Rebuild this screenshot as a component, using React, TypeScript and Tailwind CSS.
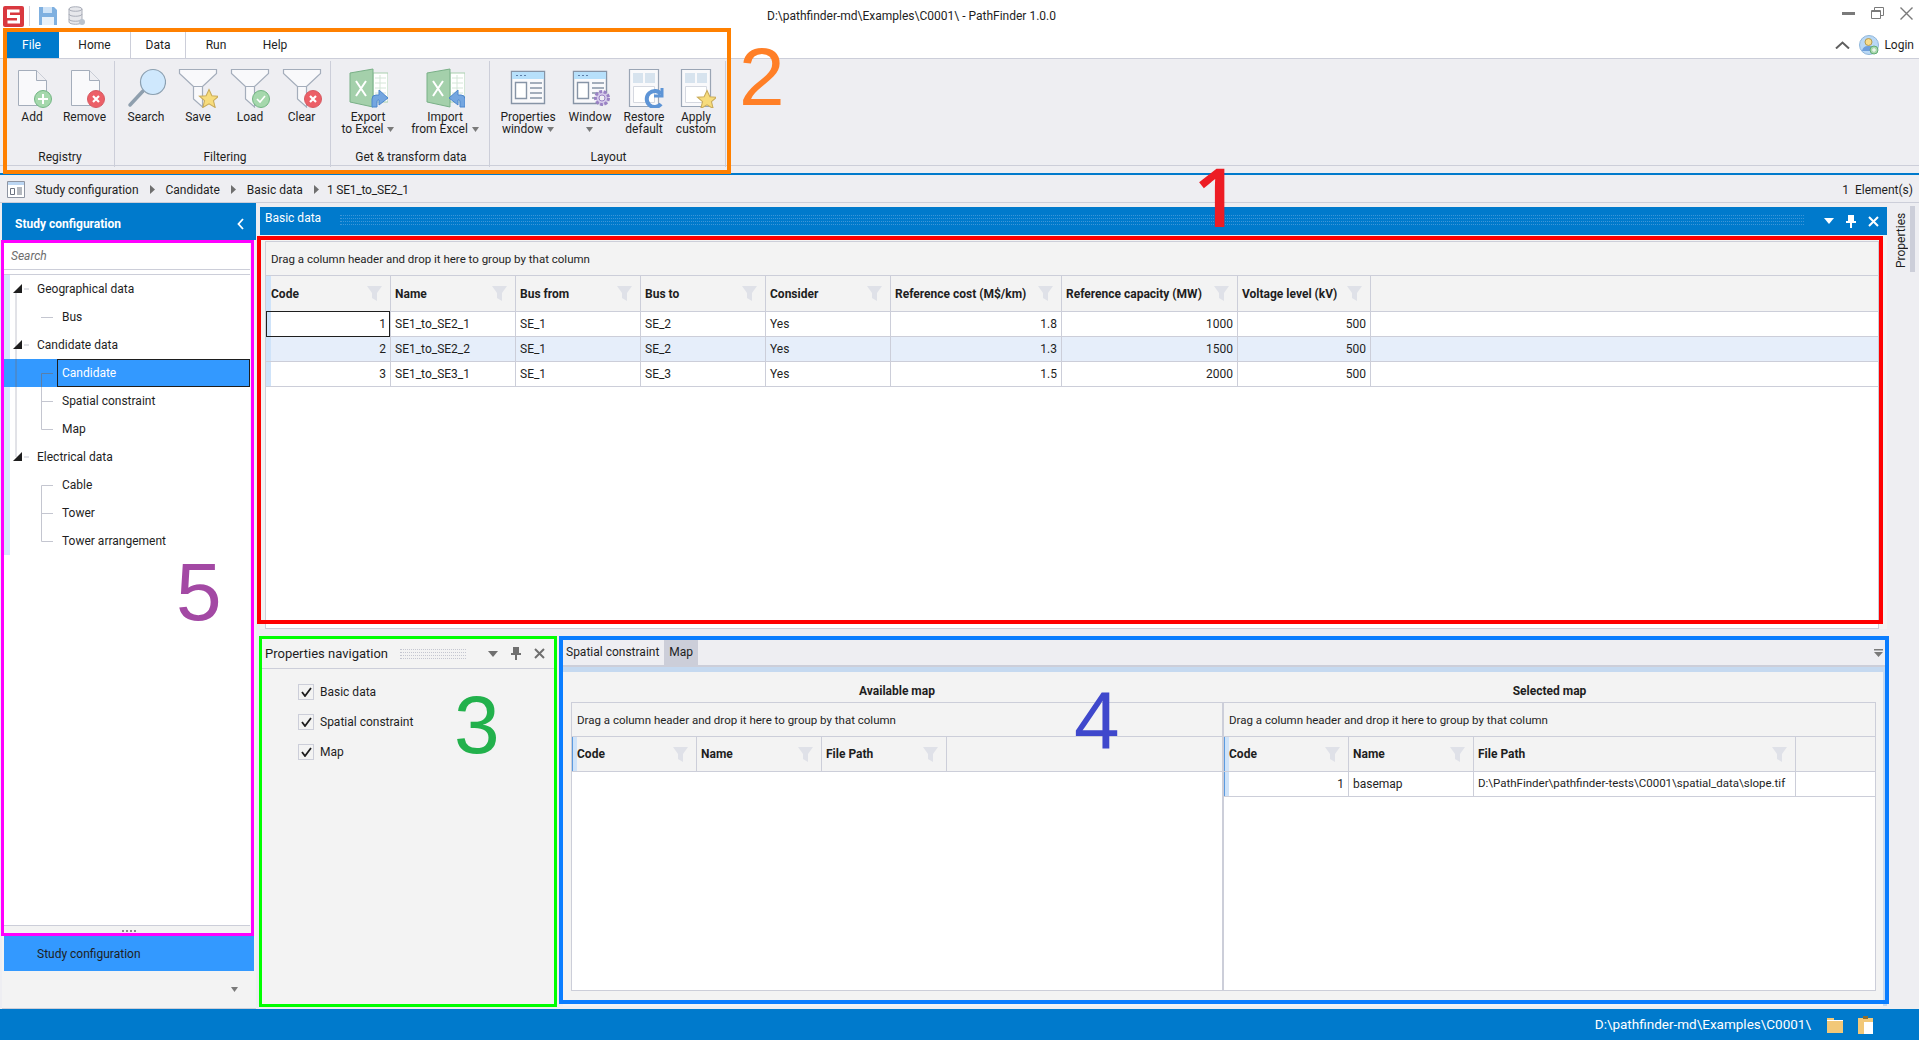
import React from 'react';

const line = 'border-[#ccced9]';

// ---- ribbon icons ----
function Badge({ kind, cx, cy, r = 8 }: { kind: 'add' | 'remove' | 'star' | 'check'; cx: number; cy: number; r?: number }) {
  if (kind === 'star') {
    const s = r / 8;
    return (
      <path
        transform={`translate(${cx} ${cy}) scale(${s})`}
        d="M0-9 2.700-3 9-2.600 4.200 1.600 5.800 8 0 4.600-5.800 8-4.200 1.600-9-2.600-2.700-3z"
        fill="#f7dc7c"
        stroke="#c9ab5a"
        strokeWidth="1"
      />
    );
  }
  const green = kind !== 'remove';
  return (
    <g>
      <circle cx={cx} cy={cy} r={r} fill={green ? '#a5d8ac' : '#ec5f67'} stroke={green ? '#72b583' : '#d65a62'} />
      {kind === 'add' && <path d={`M${cx - 5} ${cy}h10M${cx} ${cy - 5}v10`} stroke="#fff" strokeWidth="2" />}
      {kind === 'remove' && <path d={`M${cx - 3} ${cy - 3}l6 6M${cx + 3} ${cy - 3}l-6 6`} stroke="#fff" strokeWidth="2.200" />}
      {kind === 'check' && <path d={`M${cx - 4} ${cy}l3 3 5-6`} stroke="#fff" strokeWidth="1.600" fill="none" />}
    </g>
  );
}

function DocIcon({ kind }: { kind: 'add' | 'remove' }) {
  return (
    <svg width="40" height="40" viewBox="0 0 40 40">
      <path d="M6.500 2.500h18l10 10v25h-28z" fill="#f9f9fb" stroke="#a4adbb" />
      <path d="M24.500 2.500v10h10" fill="#eeeef2" stroke="#a4adbb" />
      <Badge kind={kind} cx={31} cy={31} r={8.500} />
    </svg>
  );
}

function SearchIcon() {
  return (
    <svg width="40" height="40" viewBox="0 0 40 40">
      <path d="M17 23 4 37" stroke="#8f9fae" strokeWidth="3.500" strokeLinecap="round" />
      <circle cx="27" cy="14" r="12.500" fill="#cfe8fd" stroke="#8b9fb0" strokeWidth="1.200" />
    </svg>
  );
}

function FunnelIcon({ kind }: { kind: 'star' | 'check' | 'remove' }) {
  return (
    <svg width="40" height="40" viewBox="0 0 40 40">
      <path d="M1.500 1.500h37v4L24.500 18.500V39L15.500 31V18.500L1.500 5.500z" fill="#f9f9fb" stroke="#a4adbb" strokeWidth="1.200" />
      <path d="M15.500 18.500h9" stroke="#a4adbb" />
      <Badge kind={kind} cx={31} cy={31} r={8.500} />
    </svg>
  );
}

function ExcelIcon({ dir }: { dir: 'out' | 'in' }) {
  return (
    <svg width="40" height="40" viewBox="0 0 40 40">
      <path d="M25 5h15v29H25z" fill="#fff" stroke="#a9cfae" />
      <path d="M27 10h11M27 15h11M27 20h11M27 25h11M32 7v22" stroke="#d5e6d8" />
      <path d="M2 5 25 1v38L2 34z" fill="#a4d0ab" stroke="#79b087" />
      <path d="m8 13 10 15M18 13 8 28" stroke="#fff" strokeWidth="2" />
      {dir === 'out' ? (
        <path d="M24 39v-8q0-4 4-4h3v-5l9 8-9 7v-5h-1q-1 0-1 2v5z" fill="#74a6e0" stroke="#4d86cc" />
      ) : (
        <path d="M40 39v-8q0-4-4-4h-3v-5l-9 8 9 7v-5h1q1 0 1 2v5z" fill="#74a6e0" stroke="#4d86cc" />
      )}
    </svg>
  );
}

function WindowIcon({ gear }: { gear?: boolean }) {
  return (
    <svg width="40" height="40" viewBox="0 0 40 40">
      <path d="M3.500 3.500h33v32h-33z" fill="#f9f9fb" stroke="#8794a6" strokeWidth="1.400" />
      <path d="M4 4h32v7H4z" fill="#b7e0fb" />
      <path d="M8 7.500h2M12 7.500h2M16 7.500h2" stroke="#5f7ea8" />
      <path d="M7.500 14.500h11v16h-11z" fill="#fff" stroke="#8794a6" strokeWidth="1.400" />
      <path d="M22 15h12M22 20h12M22 25h12M22 30h12" stroke="#8794a6" strokeWidth="1.400" />
      {gear && (
        <g>
          <circle cx="32" cy="30" r="6.500" fill="#d6cbeb" stroke="#9a82c4" strokeWidth="3" strokeDasharray="3 1.500" />
          <circle cx="32" cy="30" r="3" fill="#eeeef2" stroke="#9a82c4" />
        </g>
      )}
    </svg>
  );
}

function LayoutIcon({ kind }: { kind: 'restore' | 'star' }) {
  return (
    <svg width="40" height="40" viewBox="0 0 40 40">
      <path d="M5.500 1.500h29v37h-29z" fill="#f9f9fb" stroke="#9aa5b5" strokeWidth="1.200" />
      <path d="M9 5h10v10H9zM21 5h10v10H21z" fill="#d7e3ee" />
      <path d="M9.500 18.500h21v16h-21z" fill="#fff" stroke="#d5d8e0" />
      {kind === 'restore' ? (
        <g fill="none" stroke="#5d94d6" strokeWidth="4">
          <path d="M37 26a8 8 0 1 0 0 10" />
          <path d="M38 20v8h-8" strokeWidth="3" />
        </g>
      ) : (
        <Badge kind="star" cx={31} cy={32} r={8.500} />
      )}
    </svg>
  );
}

function Caret({ className = '' }: { className?: string }) {
  return (
    <svg width="7" height="5" viewBox="0 0 7 5" className={`inline-block ${className}`}>
      <path d="M0 0h7L3.500 5z" fill="#7a7a7a" />
    </svg>
  );
}

function RibbonButton({ icon, lines, w, caret }: { icon: React.ReactNode; lines: string[]; w: string; caret?: boolean }) {
  return (
    <div className={`flex flex-col items-center pt-[7px] ${w}`}>
      {icon}
      <div className="mt-[3px] text-center leading-[12px] whitespace-nowrap">
        {lines.map((l, i) => (
          <div key={i}>
            {l}
            {caret && lines.length > 1 && i === lines.length - 1 && <Caret className="ml-[4px]" />}
          </div>
        ))}
        {caret && lines.length === 1 && (
          <div>
            <Caret />
          </div>
        )}
      </div>
    </div>
  );
}

function RibbonGroup({ label, className, children }: { label: string; className: string; children: React.ReactNode }) {
  return (
    <div className={`flex flex-col h-full border-r ${line} my-[2px] ${className}`}>
      <div className="flex flex-1">{children}</div>
      <div className="h-[18px] pt-[1px] text-center leading-[14px]">{label}</div>
    </div>
  );
}

// ---- small shared bits ----
function FilterGlyph() {
  return (
    <svg width="15" height="15" viewBox="0 0 15 15" className="shrink-0">
      <path d="M0 0h15L10 7v8L5 12V7z" fill="#dfe1e8" />
    </svg>
  );
}

function PanelControls({ color, gap }: { color: string; gap: string }) {
  return (
    <div className={`flex items-center ${gap}`}>
      <svg width="10" height="6" viewBox="0 0 10 6">
        <path d="M0 0h10L5 6z" fill={color} />
      </svg>
      <svg width="10" height="13" viewBox="0 0 10 13">
        <path d="M2 0h6v6h2v2H6v5H4V8H0V6h2z" fill={color} />
      </svg>
      <svg width="11" height="11" viewBox="0 0 11 11">
        <path d="m1 1 9 9M10 1l-9 9" stroke={color} strokeWidth="2" />
      </svg>
    </div>
  );
}

function Dots({ className, color }: { className: string; color: string }) {
  return (
    <div className={`flex flex-col gap-[2px] ${className}`}>
      <div className={`border-t border-dotted ${color}`} />
      <div className={`border-t border-dotted ${color}`} />
      <div className={`border-t border-dotted ${color}`} />
      <div className={`border-t border-dotted ${color}`} />
    </div>
  );
}

// ---- grid ----
type Col = { name: string; w: string; right?: boolean; small?: boolean };

function DataGrid({
  cols,
  rows,
  headH,
  groupH,
  accent,
  selected,
  band,
  className,
}: {
  cols: Col[];
  rows: string[][];
  headH: string;
  groupH: string;
  accent: string;
  selected?: boolean;
  band?: number;
  className: string;
}) {
  return (
    <div className={`flex flex-col bg-white border ${line} ${className}`}>
      <div className={`flex items-center bg-[#f3f3f3] border-b ${line} pl-[5px] pt-[3px] text-[11.5px] ${groupH}`}>
        Drag a column header and drop it here to group by that column
      </div>
      <div className={`flex bg-[#f3f3f3] border-b ${line} ${headH}`}>
        <div className={`w-[5px] shrink-0 bg-[#cfe3f9] ${accent}`} />
        {cols.map((c, j) => (
          <div
            key={c.name}
            className={`flex items-center justify-between border-r ${line} pr-[8px] font-bold ${j === 0 ? 'pl-0' : 'pl-[4px]'} ${c.w}`}
          >
            <span>{c.name}</span>
            <FilterGlyph />
          </div>
        ))}
      </div>
      {rows.map((r, i) => (
        <div key={i} className={`flex h-[25px] border-b ${line} ${band === i ? 'bg-[#e6eefa]' : 'bg-white'}`}>
          <div className={`w-[5px] shrink-0 bg-[#cfe3f9] ${accent}`} />
          {r.map((v, j) => (
            <div
              key={j}
              className={`relative flex items-center border-r ${line} whitespace-nowrap overflow-visible ${cols[j].w} ${
                cols[j].right ? 'justify-end pr-[4px]' : 'pl-[4px]'
              } ${cols[j].small ? 'text-[11.5px]' : ''}`}
            >
              {selected && i === 0 && j === 0 && <div className="absolute -left-[5px] -top-px -bottom-px right-0 border border-[#1e1e1e]" />}
              <span className="relative">{v}</span>
            </div>
          ))}
        </div>
      ))}
    </div>
  );
}

// ---- tree ----
function TreeRow({ label, kind, lines: segs, active }: { label: string; kind: 'root' | 'leaf'; lines: string; active?: boolean }) {
  if (kind === 'root') {
    return (
      <div className="flex items-center h-[28px]">
        <svg width="33" height="28" viewBox="0 0 33 28" className="shrink-0">
          <rect width="6" height="28" fill="#d6e8fc" />
          <path d={segs} stroke="#c4c6d0" fill="none" />
          <path d="M9 18 18 9v9z" fill="#1e1e1e" />
          <path d="M20 14h5" stroke="#c4c6d0" />
        </svg>
        <span>{label}</span>
      </div>
    );
  }
  return (
    <div className={`flex items-center h-[28px] ${active ? 'bg-[#3399ff]' : ''}`}>
      <svg width="53" height="28" viewBox="0 0 53 28" className="shrink-0">
        {!active && <rect width="6" height="28" fill="#d6e8fc" />}
        <path d={segs} stroke={active ? '#5a7fa8' : '#c4c6d0'} fill="none" />
      </svg>
      <div className={`flex flex-1 items-center h-full ${active ? 'border border-[#1e1e1e] text-white pl-[4px]' : 'pl-[5px]'}`}>{label}</div>
    </div>
  );
}

const mainCols: Col[] = [
  { name: 'Code', w: 'w-[120px]', right: true },
  { name: 'Name', w: 'w-[125px]' },
  { name: 'Bus from', w: 'w-[125px]' },
  { name: 'Bus to', w: 'w-[125px]' },
  { name: 'Consider', w: 'w-[125px]' },
  { name: 'Reference cost (M$/km)', w: 'w-[171px]', right: true },
  { name: 'Reference capacity (MW)', w: 'w-[176px]', right: true },
  { name: 'Voltage level (kV)', w: 'w-[133px]', right: true },
];

const availCols: Col[] = [
  { name: 'Code', w: 'w-[120px]', right: true },
  { name: 'Name', w: 'w-[125px]' },
  { name: 'File Path', w: 'w-[125px]' },
];

const selCols: Col[] = [
  { name: 'Code', w: 'w-[120px]', right: true },
  { name: 'Name', w: 'w-[125px]' },
  { name: 'File Path', w: 'w-[322px]', small: true },
];

function Check({ label }: { label: string }) {
  return (
    <div className="flex items-center h-[30px]">
      <div className={`flex items-center justify-center w-[16px] h-[16px] border ${line} bg-[#f3f3f3] mr-[6px]`}>
        <svg width="11" height="10" viewBox="0 0 11 10">
          <path d="M1 5l3 4 6-8" stroke="#1e1e1e" strokeWidth="1.800" fill="none" />
        </svg>
      </div>
      {label}
    </div>
  );
}

function BreadArrow({ last }: { last?: boolean }) {
  return (
    <svg width="5" height="9" viewBox="0 0 5 9" className={last ? 'ml-[11px] mr-[8px]' : 'mx-[11px]'}>
      <path d="M0 0v9l5-4.500z" fill="#6f6f6f" />
    </svg>
  );
}

export default function App() {
  return (
    <div className="relative flex flex-col w-[1919px] h-[1040px] overflow-hidden bg-[#eeeef2] text-[12px] text-[#1e1e1e] [font-family:Roboto,sans-serif]">
      {/* title bar */}
      <div className="flex items-center h-[32px] bg-white pl-[3px]">
        <svg width="21" height="21" viewBox="0 0 21 21">
          <rect width="21" height="21" rx="2" fill="#d9383f" />
          <path d="M16.500 5H5.500v5.500h10V16H4.500" stroke="#fff" strokeWidth="3" fill="none" />
        </svg>
        <div className="w-px h-[20px] bg-[#d5d6de] ml-[5px]" />
        <svg width="20" height="20" viewBox="0 0 20 20" className="ml-[8px]">
          <path d="M1 1h15l3 3v15H1z" fill="#7fb0e0" />
          <path d="M5 1h9v6H5z" fill="#cfe3f7" />
          <path d="M4 11h12v8H4z" fill="#e8f1fa" />
        </svg>
        <svg width="18" height="20" viewBox="0 0 18 20" className="ml-[10px]">
          <path d="M1 3c0-3 13-3 13 0v13c0 3-13 3-13 0z" fill="#e7e8ec" stroke="#a9adb8" />
          <path d="M1 3c0 3 13 3 13 0M1 8c0 3 13 3 13 0M1 13c0 3 13 3 13 0" fill="none" stroke="#a9adb8" />
          <circle cx="14" cy="16" r="3" fill="#b9c3cf" />
        </svg>
        <div className="ml-[681px] whitespace-nowrap">D:\pathfinder-md\Examples\C0001\ - PathFinder 1.0.0</div>
        <div className="ml-auto flex items-center gap-[16px] pr-[6px] pb-[6px]">
          <svg width="13" height="3" viewBox="0 0 13 3">
            <rect width="13" height="3" fill="#7a7a7a" />
          </svg>
          <svg width="13" height="12" viewBox="0 0 13 12">
            <path d="M3.500 3V.5h9v8H10M.5 3.500h9v8h-9z" fill="none" stroke="#7a7a7a" />
            <path d="M1 3h8v2H1z" fill="#7a7a7a" />
          </svg>
          <svg width="13" height="13" viewBox="0 0 13 13">
            <path d="m.5.5 12 12M12.500.5l-12 12" stroke="#7a7a7a" strokeWidth="1.400" />
          </svg>
        </div>
      </div>

      {/* ribbon tabs */}
      <div className="flex items-stretch h-[26px] bg-white pl-[4px]">
        <div className="flex items-center justify-center w-[55px] bg-[#007acc] text-white">File</div>
        <div className="flex items-center justify-center w-[71px]">Home</div>
        <div className={`flex items-center justify-center w-[56px] border-x ${line}`}>Data</div>
        <div className="flex items-center justify-center w-[60px]">Run</div>
        <div className="flex items-center justify-center w-[58px]">Help</div>
        <div className="ml-auto flex items-center pr-[5px]">
          <svg width="15" height="8" viewBox="0 0 15 8" className="mr-[9px]">
            <path d="M1 7.500 7.500 1.500 14 7.500" stroke="#5f5f5f" strokeWidth="2" fill="none" />
          </svg>
          <svg width="20" height="20" viewBox="0 0 20 20">
            <circle cx="10" cy="10" r="9.500" fill="#b9d8f5" stroke="#8fb5da" />
            <circle cx="9.500" cy="7" r="3.500" fill="#f7dc8c" stroke="#b59b4f" />
            <path d="M3 16q1-5 6-5h2q5 0 5 5z" fill="#6f9fdc" />
            <circle cx="15" cy="15" r="4" fill="#a9d8ae" stroke="#62ad74" />
            <path d="M13 15h4M15 13v4" stroke="#fff" />
          </svg>
          <span className="ml-[5px]">Login</span>
        </div>
      </div>

      {/* ribbon body */}
      <div className={`flex h-[108px] border-y ${line} pl-[5px]`}>
        <RibbonGroup label="Registry" className="w-[110px] pl-[1px]">
          <RibbonButton w="w-[52px]" icon={<DocIcon kind="add" />} lines={['Add']} />
          <RibbonButton w="w-[53px]" icon={<DocIcon kind="remove" />} lines={['Remove']} />
        </RibbonGroup>
        <RibbonGroup label="Filtering" className="w-[216px] pl-[5px]">
          <RibbonButton w="w-[52px]" icon={<SearchIcon />} lines={['Search']} />
          <RibbonButton w="w-[52px]" icon={<FunnelIcon kind="star" />} lines={['Save']} />
          <RibbonButton w="w-[52px]" icon={<FunnelIcon kind="check" />} lines={['Load']} />
          <RibbonButton w="w-[51px]" icon={<FunnelIcon kind="remove" />} lines={['Clear']} />
        </RibbonGroup>
        <RibbonGroup label="Get & transform data" className="w-[159px] pl-[2px]">
          <RibbonButton w="w-[70px]" icon={<ExcelIcon dir="out" />} lines={['Export', 'to Excel']} caret />
          <RibbonButton w="w-[70px] ml-[7px]" icon={<ExcelIcon dir="in" />} lines={['Import', 'from Excel']} caret />
        </RibbonGroup>
        <RibbonGroup label="Layout" className="w-[236px] pl-[2px]">
          <RibbonButton w="w-[72px]" icon={<WindowIcon />} lines={['Properties', 'window']} caret />
          <RibbonButton w="w-[52px]" icon={<WindowIcon gear />} lines={['Window']} caret />
          <RibbonButton w="w-[56px]" icon={<LayoutIcon kind="restore" />} lines={['Restore', 'default']} />
          <RibbonButton w="w-[48px]" icon={<LayoutIcon kind="star" />} lines={['Apply', 'custom']} />
        </RibbonGroup>
      </div>
      <div className="h-[7px]" />
      <div className="h-[2px] bg-[#007acc]" />

      {/* breadcrumb */}
      <div className={`flex items-center h-[28px] border-b ${line} pl-[7px] pr-[6px] pt-[2px]`}>
        <svg width="18" height="17" viewBox="0 0 18 17" className="mr-[10px]">
          <path d="M.5.500h17v16H.5z" fill="#fff" stroke="#8f95a2" />
          <path d="M1 1h16v3H1z" fill="#bcd6f2" />
          <path d="M3.500 7.500h4v6h-4z" fill="none" stroke="#6b7280" />
          <path d="M10 7h5M10 9h5M10 11h5M10 13h5" stroke="#6b7280" />
        </svg>
        <span>Study configuration</span>
        <BreadArrow />
        <span>Candidate</span>
        <BreadArrow />
        <span>Basic data</span>
        <BreadArrow last />
        <span className="tracking-[-0.2px]">1 SE1_to_SE2_1</span>
        <span className="ml-auto mr-[6px]">1</span>
        <span>Element(s)</span>
      </div>

      {/* main */}
      <div className="flex flex-1 min-h-0">
        {/* left navigator */}
        <div className={`flex flex-col w-[254px] ml-[2px] bg-[#f3f3f3] border-b ${line}`}>
          <div className="flex items-center justify-between h-[37px] bg-[#007acc] text-white font-bold pl-[13px] pr-[12px] pt-[4px] shrink-0">
            Study configuration
            <svg width="7" height="12" viewBox="0 0 7 12">
              <path d="M6 1 1.500 6 6 11" stroke="#fff" strokeWidth="1.800" fill="none" />
            </svg>
          </div>
          <div className="flex flex-col flex-1 w-[246px] ml-[2px] bg-white">
            <div className={`flex items-center h-[30px] border-b ${line} pl-[7px] pt-[2px] italic text-[#6d6d6d] shrink-0`}>Search</div>
            <div className={`h-[5px] border-b ${line} shrink-0`} />
            <div className="flex flex-col flex-1">
              <TreeRow kind="root" label="Geographical data" lines="M12 18V28" />
              <TreeRow kind="leaf" label="Bus" lines="M12 0V28M37 14.500H49" />
              <TreeRow kind="root" label="Candidate data" lines="M12 0V28" />
              <TreeRow kind="leaf" label="Candidate" active lines="M12 0V28M37.500 28V14.500H49" />
              <TreeRow kind="leaf" label="Spatial constraint" lines="M12 0V28M37.500 0V28M37 14.500H49" />
              <TreeRow kind="leaf" label="Map" lines="M12 0V28M37.500 0V14.500H49" />
              <TreeRow kind="root" label="Electrical data" lines="M12 0V14" />
              <TreeRow kind="leaf" label="Cable" lines="M37.500 28V14.500H49" />
              <TreeRow kind="leaf" label="Tower" lines="M37.500 0V28M37 14.500H49" />
              <TreeRow kind="leaf" label="Tower arrangement" lines="M37.500 0V14.500H49" />
            </div>
            <div className="h-[1px] bg-[#ccced9] shrink-0" />
          </div>
          <div className="flex items-center justify-center h-[10px] shrink-0 gap-[2px]">
            <div className="w-[2px] h-[2px] bg-[#8a8a8a]" />
            <div className="w-[2px] h-[2px] bg-[#8a8a8a]" />
            <div className="w-[2px] h-[2px] bg-[#8a8a8a]" />
            <div className="w-[2px] h-[2px] bg-[#8a8a8a]" />
          </div>
          <div className="flex items-center h-[35px] mx-[2px] bg-[#3399ff] pl-[33px] shrink-0">Study configuration</div>
          <div className="flex flex-1 max-h-[37px] items-center justify-end pr-[18px]">
            <Caret />
          </div>
        </div>

        {/* centre */}
        <div className="flex flex-col w-[1627px] ml-[4px] pt-[4px]">
          <div className="flex items-center h-[28px] bg-[#007acc] text-white pl-[5px] pr-[8px] shrink-0">
            <span className="pb-[6px]">Basic data</span>
            <Dots className="flex-1 ml-[19px] mr-[20px] pb-[2px]" color="border-[#3d96d8]" />
            <PanelControls color="#ffffff" gap="gap-[12px]" />
          </div>
          <div className="flex flex-col h-[394px] bg-[#f3f3f3] pl-[5px] pr-[8px] pt-[6px] shrink-0">
            <DataGrid
              className="flex-1"
              cols={mainCols}
              headH="h-[36px]"
              groupH="h-[34px]"
              accent=""
              selected
              band={1}
              rows={[
                ['1', 'SE1_to_SE2_1', 'SE_1', 'SE_2', 'Yes', '1.8', '1000', '500'],
                ['2', 'SE1_to_SE2_2', 'SE_1', 'SE_2', 'Yes', '1.3', '1500', '500'],
                ['3', 'SE1_to_SE3_1', 'SE_1', 'SE_3', 'Yes', '1.5', '2000', '500'],
              ]}
            />
          </div>
          <div className="flex flex-1 min-h-0 pt-[10px] pb-[3px]">
            {/* properties navigation */}
            <div className="flex flex-col w-[292px] ml-[2px] bg-[#f3f3f3]">
              <div className={`flex items-center h-[30px] border-b ${line} pl-[3px] pr-[9px] text-[13px] shrink-0`}>
                <span className="whitespace-nowrap shrink-0">Properties navigation</span>
                <Dots className="w-[70px] ml-[12px] mr-[22px]" color="border-[#c4c6d0]" />
                <PanelControls color="#6f6f6f" gap="gap-[13px]" />
              </div>
              <div className="flex flex-col pl-[36px] pt-[8px]">
                <Check label="Basic data" />
                <Check label="Spatial constraint" />
                <Check label="Map" />
              </div>
            </div>

            {/* map tabs */}
            <div className="flex flex-col w-[1324px] ml-[9px]">
              <div className={`flex items-end h-[28px] border-b-2 ${line} pl-[1px] pr-[4px] shrink-0`}>
                <div className="flex items-center h-[26px] px-[2px] mr-[3px]">Spatial constraint</div>
                <div className="flex items-center h-[26px] px-[5px] bg-[#ccced9]">Map</div>
                <svg width="9" height="8" viewBox="0 0 9 8" className="ml-auto mb-[8px]">
                  <path d="M0 0h9v1.500H0zM0 3h9L4.500 8z" fill="#7a7a7a" />
                </svg>
              </div>
              <div className="h-[5px] bg-[#c5d9f0] shrink-0" />
              <div className="flex flex-col flex-1 min-h-0 bg-[#f3f3f3] pl-[8px] pr-[7px] pb-[15px] border-r-4 border-[#c5d9f0]">
                <div className="flex h-[30px] font-bold pt-[7px] shrink-0">
                  <div className="flex items-center justify-center w-[652px]">Available map</div>
                  <div className="flex items-center justify-center flex-1">Selected map</div>
                </div>
                <div className="flex flex-1 min-h-0">
                  <DataGrid
                    className="w-[652px]"
                    cols={availCols}
                    headH="h-[35px]"
                    groupH="h-[34px]"
                    accent="border-l border-[#5b9be0]"
                    rows={[]}
                  />
                  <DataGrid
                    className="flex-1"
                    cols={selCols}
                    headH="h-[35px]"
                    groupH="h-[34px]"
                    accent="border-l border-[#5b9be0]"
                    rows={[['1', 'basemap', 'D:\\PathFinder\\pathfinder-tests\\C0001\\spatial_data\\slope.tif']]}
                  />
                </div>
              </div>
            </div>
          </div>
        </div>

        {/* properties side strip */}
        <div className="relative flex-1 pt-[6px]">
          <div className="pr-[5px] h-[62px] [writing-mode:vertical-rl] rotate-180 text-center">Properties</div>
          <div className="absolute right-[4px] top-[3px] w-[5px] h-[66px] bg-[#ccced9]" />
        </div>
      </div>

      {/* status bar */}
      <div className="flex items-center justify-end h-[31px] bg-[#007acc] text-white pr-[46px] text-[13.5px]">
        <span>D:\pathfinder-md\Examples\C0001\</span>
        <svg width="16" height="16" viewBox="0 0 16 16" className="ml-[16px]">
          <path d="M0 1h7v2h9v13H0z" fill="#f2c878" />
          <path d="M0 3h16v1H0z" fill="#fff" />
        </svg>
        <svg width="15" height="18" viewBox="0 0 15 18" className="ml-[15px]">
          <path d="M0 2h15v16H0z" fill="#f2c878" />
          <path d="M5 0h5v3H5z" fill="#8a6d2f" />
          <path d="M6 6h9v12H6z" fill="#fff" />
        </svg>
      </div>

      {/* annotation marks drawn over the screenshot */}
      <div className="absolute left-[3px] top-[28px] w-[728px] h-[146px] border-4 border-[#ff8000]" />
      <div className="absolute left-[257px] top-[236px] w-[1626px] h-[388px] border-4 border-[#ff0000]" />
      <div className="absolute left-[1px] top-[240px] w-[253px] h-[696px] border-[3px] border-[#ff00ff]" />
      <div className="absolute left-[259px] top-[636px] w-[298px] h-[371px] border-[3px] border-[#00ff00]" />
      <div className="absolute left-[559px] top-[636px] w-[1330px] h-[368px] border-4 border-[#0a7dff]" />
      <div className="absolute left-[739px] top-[31px] text-[82px] leading-[92px] text-[#ff7f27] [font-family:'Liberation_Sans',sans-serif]">2</div>
      <div className="absolute left-[1193px] top-[149px] text-[82px] leading-[92px] text-[#ed1c24] font-semibold [font-family:'Open_Sans',sans-serif]">1</div>
      <div className="absolute left-[176px] top-[546px] text-[82px] leading-[92px] text-[#a349a4] [font-family:'Liberation_Sans',sans-serif]">5</div>
      <div className="absolute left-[454px] top-[679px] text-[82px] leading-[92px] text-[#22b14c] [font-family:'Liberation_Sans',sans-serif]">3</div>
      <div className="absolute left-[1074px] top-[675px] text-[82px] leading-[92px] text-[#3f48cc] [font-family:'Liberation_Sans',sans-serif]">4</div>
    </div>
  );
}
